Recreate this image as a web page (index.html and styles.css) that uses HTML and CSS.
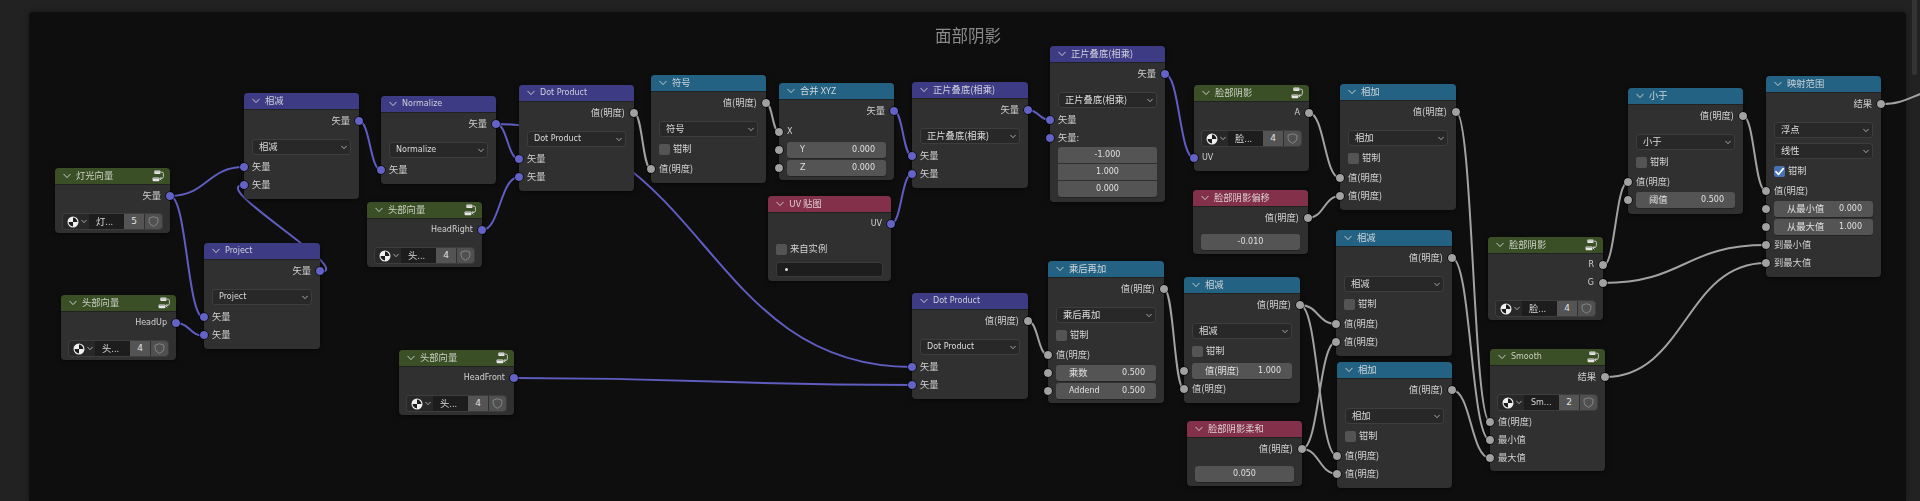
FILE: index.html
```html
<!DOCTYPE html>
<html lang="zh">
<head>
<meta charset="utf-8">
<title>面部阴影</title>
<link rel="stylesheet" href="styles.css">
</head>
<body>
<svg class="defs" width="0" height="0" aria-hidden="true">
  <symbol id="chev" viewBox="0 0 8 6"><path d="M.8 1.200 4 4.600 7.200 1.200" fill="none" stroke="currentColor" stroke-width="1" stroke-linecap="round" stroke-linejoin="round"/></symbol>
  <symbol id="grp" viewBox="0 0 12 12"><rect x="2.300" y=".6" width="6.200" height="3.400" rx=".8" fill="#e6e6e6"/><rect x="2.900" y="1.600" width="5" height=".6" fill="#9a9a9a"/><rect x=".6" y="7.400" width="6.800" height="3.900" rx=".8" fill="#e6e6e6"/><rect x="1.200" y="8" width="5.600" height=".7" fill="#8f8f8f"/><path d="M9 2.200h1.200q1.200 0 1.200 1.200v3.300q0 1.300-1.200 1.600L8.200 8.800" fill="none" stroke="#e6e6e6" stroke-width=".8"/><path d="M9.400 7 7.800 8.800l1.600 1.500" fill="none" stroke="#e6e6e6" stroke-width=".8"/></symbol>
  <symbol id="ball" viewBox="0 0 12 12"><circle cx="6" cy="6" r="5.500" fill="#efefef"/><path d="M6 6V1.600A4.400 4.400 0 0 1 10.400 6ZM6 6v4.400A4.400 4.400 0 0 1 1.600 6Z" fill="#1c1c1c"/></symbol>
  <symbol id="shield" viewBox="0 0 12 12"><path d="M6 .8 10.800 2.400V6q0 3.400-4.800 5.300Q1.200 9.400 1.200 6V2.400Z" fill="none" stroke="#9a9a9a" stroke-width=".8" stroke-linejoin="round"/></symbol>
  <symbol id="check" viewBox="0 0 10 10"><path d="M1.800 5.200 4.100 7.600 8.400 2.400" fill="none" stroke="#fff" stroke-width="1.500" stroke-linecap="round" stroke-linejoin="round"/></symbol>
</svg>

<main class="editor">
  <div class="frame"></div>
  <h1 class="frame-title">面部阴影</h1>

  <svg class="links" viewBox="0 0 1920 501" aria-hidden="true">
    <g class="vec-links">
      <path d="M170 196C207 196 207 167 244 167"/>
      <path d="M170 196C187 196 187 318 204 318"/>
      <path d="M176 323C190 323 190 336 204 336"/>
      <path d="M320 272C358 272 206 185 244 185"/>
      <path d="M359 121C370 121 370 170 381 170"/>
      <path d="M496 124C507.500 124 507.500 159 519 159"/>
      <path d="M496 124C704 124 704 367 912 367"/>
      <path d="M482 230C500 230 500 177 519 177"/>
      <path d="M514 378C713 378 713 385 912 385"/>
      <path d="M894 111C903 111 903 156 912 156"/>
      <path d="M891 224C901.500 224 901.500 174 912 174"/>
      <path d="M1028 110C1039 110 1039 120 1050 120"/>
      <path d="M1165 74C1179.500 74 1179.500 158 1194 158"/>
    </g>
    <g class="val-links">
      <path d="M634 113C642.500 113 642.500 169 651 169"/>
      <path d="M766 103C772.500 103 772.500 132 779 132"/>
      <path d="M1028 321C1038 321 1038 355 1048 355"/>
      <path d="M1164 289C1174 289 1174 389 1184 389"/>
      <path d="M1300 305C1318 305 1318 324 1336 324"/>
      <path d="M1300 305C1318.500 305 1318.500 456 1337 456"/>
      <path d="M1302 449C1319 449 1319 342 1336 342"/>
      <path d="M1302 449C1319.500 449 1319.500 474 1337 474"/>
      <path d="M1309 113C1324.500 113 1324.500 178 1340 178"/>
      <path d="M1308 218C1324 218 1324 196 1340 196"/>
      <path d="M1456 112C1473 112 1473 422 1490 422"/>
      <path d="M1452 258C1471 258 1471 440 1490 440"/>
      <path d="M1452 390C1471 390 1471 458 1490 458"/>
      <path d="M1603 266C1615.500 266 1615.500 182 1628 182"/>
      <path d="M1603 283C1684.500 283 1684.500 245 1766 245"/>
      <path d="M1605 377C1685.500 377 1685.500 263 1766 263"/>
      <path d="M1743 116C1754.500 116 1754.500 191 1766 191"/>
      <path d="M1881 104C1900 104 1905 100 1925 92"/>
    </g>
  </svg>

  <section class="node grp-node n-light">
    <header class="hd green"><svg class="chev"><use href="#chev"/></svg><span class="zh">灯光向量</span><svg class="gi"><use href="#grp"/></svg></header>
    <div class="row out"><span class="zh">矢量</span><i class="sock vec"></i></div>
    <div class="idb"><span class="idb-a"><svg class="ball"><use href="#ball"/></svg><svg class="mini"><use href="#chev"/></svg></span><span class="idb-n zh">灯...</span><span class="idb-c">5</span><span class="idb-s"><svg class="shield"><use href="#shield"/></svg></span></div>
  </section>

  <section class="node n-sub1">
    <header class="hd purple"><svg class="chev"><use href="#chev"/></svg><span class="zh">相减</span></header>
    <div class="row out"><span class="zh">矢量</span><i class="sock vec"></i></div>
    <div class="dd"><span class="zh">相减</span><svg class="mini"><use href="#chev"/></svg></div>
    <div class="row in first"><i class="sock vec"></i><span class="zh">矢量</span></div>
    <div class="row in"><i class="sock vec"></i><span class="zh">矢量</span></div>
  </section>

  <section class="node n-norm">
    <header class="hd purple"><svg class="chev"><use href="#chev"/></svg><span>Normalize</span></header>
    <div class="row out"><span class="zh">矢量</span><i class="sock vec"></i></div>
    <div class="dd"><span>Normalize</span><svg class="mini"><use href="#chev"/></svg></div>
    <div class="row in first"><i class="sock vec"></i><span class="zh">矢量</span></div>
  </section>

  <section class="node grp-node n-hright">
    <header class="hd green"><svg class="chev"><use href="#chev"/></svg><span class="zh">头部向量</span><svg class="gi"><use href="#grp"/></svg></header>
    <div class="row out"><span>HeadRight</span><i class="sock vec"></i></div>
    <div class="idb"><span class="idb-a"><svg class="ball"><use href="#ball"/></svg><svg class="mini"><use href="#chev"/></svg></span><span class="idb-n zh">头...</span><span class="idb-c">4</span><span class="idb-s"><svg class="shield"><use href="#shield"/></svg></span></div>
  </section>

  <section class="node n-project">
    <header class="hd purple"><svg class="chev"><use href="#chev"/></svg><span>Project</span></header>
    <div class="row out"><span class="zh">矢量</span><i class="sock vec"></i></div>
    <div class="dd"><span>Project</span><svg class="mini"><use href="#chev"/></svg></div>
    <div class="row in first"><i class="sock vec"></i><span class="zh">矢量</span></div>
    <div class="row in"><i class="sock vec"></i><span class="zh">矢量</span></div>
  </section>

  <section class="node grp-node n-hup">
    <header class="hd green"><svg class="chev"><use href="#chev"/></svg><span class="zh">头部向量</span><svg class="gi"><use href="#grp"/></svg></header>
    <div class="row out"><span>HeadUp</span><i class="sock vec"></i></div>
    <div class="idb"><span class="idb-a"><svg class="ball"><use href="#ball"/></svg><svg class="mini"><use href="#chev"/></svg></span><span class="idb-n zh">头...</span><span class="idb-c">4</span><span class="idb-s"><svg class="shield"><use href="#shield"/></svg></span></div>
  </section>

  <section class="node grp-node n-hfront">
    <header class="hd green"><svg class="chev"><use href="#chev"/></svg><span class="zh">头部向量</span><svg class="gi"><use href="#grp"/></svg></header>
    <div class="row out"><span>HeadFront</span><i class="sock vec"></i></div>
    <div class="idb"><span class="idb-a"><svg class="ball"><use href="#ball"/></svg><svg class="mini"><use href="#chev"/></svg></span><span class="idb-n zh">头...</span><span class="idb-c">4</span><span class="idb-s"><svg class="shield"><use href="#shield"/></svg></span></div>
  </section>

  <section class="node n-dot1">
    <header class="hd purple"><svg class="chev"><use href="#chev"/></svg><span>Dot Product</span></header>
    <div class="row out"><span class="zh">值(明度)</span><i class="sock val"></i></div>
    <div class="dd"><span>Dot Product</span><svg class="mini"><use href="#chev"/></svg></div>
    <div class="row in first"><i class="sock vec"></i><span class="zh">矢量</span></div>
    <div class="row in"><i class="sock vec"></i><span class="zh">矢量</span></div>
  </section>

  <section class="node n-sign">
    <header class="hd blue"><svg class="chev"><use href="#chev"/></svg><span class="zh">符号</span></header>
    <div class="row out"><span class="zh">值(明度)</span><i class="sock val"></i></div>
    <div class="dd"><span class="zh">符号</span><svg class="mini"><use href="#chev"/></svg></div>
    <div class="row cb first"><i class="box"></i><span class="zh">钳制</span></div>
    <div class="row in after-cb"><i class="sock val"></i><span class="zh">值(明度)</span></div>
  </section>

  <section class="node tight n-xyz">
    <header class="hd blue"><svg class="chev"><use href="#chev"/></svg><span class="zh">合并 XYZ</span></header>
    <div class="row out"><span class="zh">矢量</span><i class="sock vec"></i></div>
    <div class="row in first"><i class="sock val"></i><span>X</span></div>
    <div class="row in fld"><i class="sock val"></i><div class="f"><span>Y</span><span>0.000</span></div></div>
    <div class="row in fld"><i class="sock val"></i><div class="f"><span>Z</span><span>0.000</span></div></div>
  </section>

  <section class="node grp-node n-uv">
    <header class="hd red"><svg class="chev"><use href="#chev"/></svg><span class="zh">UV 贴图</span></header>
    <div class="row out"><span>UV</span><i class="sock vec"></i></div>
    <div class="row cb uv-cb"><i class="box"></i><span class="zh">来自实例</span></div>
    <div class="txt"><i class="dot"></i></div>
  </section>

  <section class="node n-mul1">
    <header class="hd purple"><svg class="chev"><use href="#chev"/></svg><span class="zh">正片叠底(相乘)</span></header>
    <div class="row out"><span class="zh">矢量</span><i class="sock vec"></i></div>
    <div class="dd"><span class="zh">正片叠底(相乘)</span><svg class="mini"><use href="#chev"/></svg></div>
    <div class="row in first"><i class="sock vec"></i><span class="zh">矢量</span></div>
    <div class="row in"><i class="sock vec"></i><span class="zh">矢量</span></div>
  </section>

  <section class="node n-mul2">
    <header class="hd purple"><svg class="chev"><use href="#chev"/></svg><span class="zh">正片叠底(相乘)</span></header>
    <div class="row out"><span class="zh">矢量</span><i class="sock vec"></i></div>
    <div class="dd"><span class="zh">正片叠底(相乘)</span><svg class="mini"><use href="#chev"/></svg></div>
    <div class="row in first"><i class="sock vec"></i><span class="zh">矢量</span></div>
    <div class="row in"><i class="sock vec"></i><span class="zh">矢量:</span></div>
    <div class="stack"><span>-1.000</span><span>1.000</span><span>0.000</span></div>
  </section>

  <section class="node grp-node n-face1">
    <header class="hd green"><svg class="chev"><use href="#chev"/></svg><span class="zh">脸部阴影</span><svg class="gi"><use href="#grp"/></svg></header>
    <div class="row out"><span>A</span><i class="sock val"></i></div>
    <div class="idb"><span class="idb-a"><svg class="ball"><use href="#ball"/></svg><svg class="mini"><use href="#chev"/></svg></span><span class="idb-n zh">脸...</span><span class="idb-c">4</span><span class="idb-s"><svg class="shield"><use href="#shield"/></svg></span></div>
    <div class="row in first"><i class="sock vec"></i><span>UV</span></div>
  </section>

  <section class="node grp-node n-offset">
    <header class="hd red"><svg class="chev"><use href="#chev"/></svg><span class="zh">脸部阴影偏移</span></header>
    <div class="row out"><span class="zh">值(明度)</span><i class="sock val"></i></div>
    <div class="one">-0.010</div>
  </section>

  <section class="node n-add1">
    <header class="hd blue"><svg class="chev"><use href="#chev"/></svg><span class="zh">相加</span></header>
    <div class="row out"><span class="zh">值(明度)</span><i class="sock val"></i></div>
    <div class="dd"><span class="zh">相加</span><svg class="mini"><use href="#chev"/></svg></div>
    <div class="row cb first"><i class="box"></i><span class="zh">钳制</span></div>
    <div class="row in after-cb"><i class="sock val"></i><span class="zh">值(明度)</span></div>
    <div class="row in"><i class="sock val"></i><span class="zh">值(明度)</span></div>
  </section>

  <section class="node n-sub2">
    <header class="hd blue"><svg class="chev"><use href="#chev"/></svg><span class="zh">相减</span></header>
    <div class="row out"><span class="zh">值(明度)</span><i class="sock val"></i></div>
    <div class="dd"><span class="zh">相减</span><svg class="mini"><use href="#chev"/></svg></div>
    <div class="row cb first"><i class="box"></i><span class="zh">钳制</span></div>
    <div class="row in after-cb"><i class="sock val"></i><span class="zh">值(明度)</span></div>
    <div class="row in"><i class="sock val"></i><span class="zh">值(明度)</span></div>
  </section>

  <section class="node n-dot2">
    <header class="hd purple"><svg class="chev"><use href="#chev"/></svg><span>Dot Product</span></header>
    <div class="row out"><span class="zh">值(明度)</span><i class="sock val"></i></div>
    <div class="dd"><span>Dot Product</span><svg class="mini"><use href="#chev"/></svg></div>
    <div class="row in first"><i class="sock vec"></i><span class="zh">矢量</span></div>
    <div class="row in"><i class="sock vec"></i><span class="zh">矢量</span></div>
  </section>

  <section class="node tight n-muladd">
    <header class="hd blue"><svg class="chev"><use href="#chev"/></svg><span class="zh">乘后再加</span></header>
    <div class="row out"><span class="zh">值(明度)</span><i class="sock val"></i></div>
    <div class="dd"><span class="zh">乘后再加</span><svg class="mini"><use href="#chev"/></svg></div>
    <div class="row cb first"><i class="box"></i><span class="zh">钳制</span></div>
    <div class="row in after-cb"><i class="sock val"></i><span class="zh">值(明度)</span></div>
    <div class="row in fld"><i class="sock val"></i><div class="f"><span class="zh">乘数</span><span>0.500</span></div></div>
    <div class="row in fld"><i class="sock val"></i><div class="f"><span>Addend</span><span>0.500</span></div></div>
  </section>

  <section class="node n-sub3">
    <header class="hd blue"><svg class="chev"><use href="#chev"/></svg><span class="zh">相减</span></header>
    <div class="row out"><span class="zh">值(明度)</span><i class="sock val"></i></div>
    <div class="dd"><span class="zh">相减</span><svg class="mini"><use href="#chev"/></svg></div>
    <div class="row cb first"><i class="box"></i><span class="zh">钳制</span></div>
    <div class="row in fld after-cb"><i class="sock val"></i><div class="f"><span class="zh">值(明度)</span><span>1.000</span></div></div>
    <div class="row in"><i class="sock val"></i><span class="zh">值(明度)</span></div>
  </section>

  <section class="node grp-node n-soft">
    <header class="hd red"><svg class="chev"><use href="#chev"/></svg><span class="zh">脸部阴影柔和</span></header>
    <div class="row out"><span class="zh">值(明度)</span><i class="sock val"></i></div>
    <div class="one">0.050</div>
  </section>

  <section class="node n-add2">
    <header class="hd blue"><svg class="chev"><use href="#chev"/></svg><span class="zh">相加</span></header>
    <div class="row out"><span class="zh">值(明度)</span><i class="sock val"></i></div>
    <div class="dd"><span class="zh">相加</span><svg class="mini"><use href="#chev"/></svg></div>
    <div class="row cb first"><i class="box"></i><span class="zh">钳制</span></div>
    <div class="row in after-cb"><i class="sock val"></i><span class="zh">值(明度)</span></div>
    <div class="row in"><i class="sock val"></i><span class="zh">值(明度)</span></div>
  </section>

  <section class="node grp-node n-face2">
    <header class="hd green"><svg class="chev"><use href="#chev"/></svg><span class="zh">脸部阴影</span><svg class="gi"><use href="#grp"/></svg></header>
    <div class="row out"><span>R</span><i class="sock val"></i></div>
    <div class="row out"><span>G</span><i class="sock val"></i></div>
    <div class="idb"><span class="idb-a"><svg class="ball"><use href="#ball"/></svg><svg class="mini"><use href="#chev"/></svg></span><span class="idb-n zh">脸...</span><span class="idb-c">4</span><span class="idb-s"><svg class="shield"><use href="#shield"/></svg></span></div>
  </section>

  <section class="node grp-node n-smooth">
    <header class="hd green"><svg class="chev"><use href="#chev"/></svg><span>Smooth</span><svg class="gi"><use href="#grp"/></svg></header>
    <div class="row out"><span class="zh">结果</span><i class="sock val"></i></div>
    <div class="idb"><span class="idb-a"><svg class="ball"><use href="#ball"/></svg><svg class="mini"><use href="#chev"/></svg></span><span class="idb-n">Sm...</span><span class="idb-c">2</span><span class="idb-s"><svg class="shield"><use href="#shield"/></svg></span></div>
    <div class="row in first"><i class="sock val"></i><span class="zh">值(明度)</span></div>
    <div class="row in"><i class="sock val"></i><span class="zh">最小值</span></div>
    <div class="row in"><i class="sock val"></i><span class="zh">最大值</span></div>
  </section>

  <section class="node n-less">
    <header class="hd blue"><svg class="chev"><use href="#chev"/></svg><span class="zh">小于</span></header>
    <div class="row out"><span class="zh">值(明度)</span><i class="sock val"></i></div>
    <div class="dd"><span class="zh">小于</span><svg class="mini"><use href="#chev"/></svg></div>
    <div class="row cb first"><i class="box"></i><span class="zh">钳制</span></div>
    <div class="row in after-cb"><i class="sock val"></i><span class="zh">值(明度)</span></div>
    <div class="row in fld"><i class="sock val"></i><div class="f"><span class="zh">阈值</span><span>0.500</span></div></div>
  </section>

  <section class="node n-map">
    <header class="hd blue"><svg class="chev"><use href="#chev"/></svg><span class="zh">映射范围</span></header>
    <div class="row out"><span class="zh">结果</span><i class="sock val"></i></div>
    <div class="dd"><span class="zh">浮点</span><svg class="mini"><use href="#chev"/></svg></div>
    <div class="dd dd-2"><span class="zh">线性</span><svg class="mini"><use href="#chev"/></svg></div>
    <div class="row cb first"><i class="box on"><svg class="tick"><use href="#check"/></svg></i><span class="zh">钳制</span></div>
    <div class="row in after-cb"><i class="sock val"></i><span class="zh">值(明度)</span></div>
    <div class="row in fld"><i class="sock val"></i><div class="f"><span class="zh">从最小值</span><span>0.000</span></div></div>
    <div class="row in fld"><i class="sock val"></i><div class="f"><span class="zh">从最大值</span><span>1.000</span></div></div>
    <div class="row in"><i class="sock val"></i><span class="zh">到最小值</span></div>
    <div class="row in"><i class="sock val"></i><span class="zh">到最大值</span></div>
  </section>

  <div class="scroll"></div>
</main>
</body>
</html>
```

FILE: styles.css
```css
* { box-sizing: border-box; }
html, body { margin: 0; height: 100%; }
body { background: #222; overflow: hidden; font: 8px/1 "DejaVu Sans", "Noto Sans CJK SC", sans-serif; color: #d2d2d2; }
.defs { position: absolute; }

.editor { position: relative; width: 1920px; height: 501px; padding: 12px 14px 0 29px; overflow: hidden; filter: blur(.3px); }
.frame { height: 100%; background: #0e0e0e; border-radius: 4px 4px 0 0; box-shadow: 0 0 6px rgba(0, 0, 0, .35); }
.frame-title { position: absolute; left: 935px; top: 26px; margin: 0; font: 400 16.500px/18px "Noto Sans CJK SC", sans-serif; color: #8a8a8a; }
.scroll { position: absolute; left: 1912px; top: 0; width: 5px; height: 75px; background: #343434; border-radius: 0 0 3px 3px; }

.links { position: absolute; inset: 0; width: 1920px; height: 501px; fill: none; stroke-width: 2; }
.vec-links { stroke: #5f5dc0; }
.val-links { stroke: #a2a2a2; }

.node { position: absolute; width: 115px; background: #303030; border-radius: 4px; padding-bottom: 5px; box-shadow: 0 1px 4px rgba(0, 0, 0, .55); }
.grp-node { padding-bottom: 4px; }
.tight { padding-bottom: 3px; }

.hd { display: flex; align-items: center; height: 16px; padding: 0 6px 0 8px; border-radius: 4px 4px 0 0; color: #c9cfc4; box-shadow: 0 1px 0 rgba(0, 0, 0, .3); }
.green { background: #3a4f25; }
.purple { background: #3c3b84; color: #cfcfdc; }
.blue { background: #246283; color: #cdd6db; }
.red { background: #83304a; color: #dccfd3; }
.chev { width: 8px; height: 6px; margin-right: 5px; flex: none; color: #c8c8c8; }
.gi { width: 12px; height: 12px; margin-left: auto; flex: none; }
.zh { font-size: 9.300px; font-family: "Noto Sans CJK SC", "DejaVu Sans", sans-serif; }

.row { position: relative; display: flex; align-items: center; height: 18px; }
.out { justify-content: flex-end; padding-right: 9px; }
.hd + .out { margin-top: 3px; }
.in { padding: 0 8px; }
.first { margin-top: 3px; }
.in.fld + .in, .row.cb + .in { margin-top: 0; }
.row.cb + .in { margin-top: 2px; }

.sock { position: absolute; top: 50%; width: 8px; height: 8px; margin-top: -4px; border-radius: 50%; outline: 1px solid rgba(0, 0, 0, .55); }
.out .sock { right: -4px; }
.in .sock { left: -4px; }
.vec { background: #6363c7; }
.val { background: #a1a1a1; }

.dd { display: flex; align-items: center; justify-content: space-between; height: 16px; margin: 9px 8px 0; padding: 0 3px 0 6px; background: #282828; border: 1px solid #3d3d3d; border-radius: 3px; color: #dcdcdc; }
.dd-2 { margin-top: 5px; }
.mini { width: 6px; height: 5px; flex: none; color: #d0d0d0; }

.cb { padding-left: 8px; gap: 3px; }
.box { display: block; width: 11px; height: 11px; background: #545454; border-radius: 2px; flex: none; }
.box.on { background: #4772b3; }
.tick { display: block; width: 11px; height: 11px; }
.uv-cb { margin-top: 7px; }

.fld .f { display: flex; flex: 1; align-items: center; justify-content: space-between; height: 16px; padding: 0 11px 0 13px; background: #545454; border-radius: 3px; color: #e0e0e0; box-shadow: 0 1px 0 rgba(0, 0, 0, .25); }

.txt { display: flex; align-items: center; height: 15px; margin: 4px 8px 0; padding-left: 8px; background: #1d1d1d; border: 1px solid #3a3a3a; border-radius: 3px; }
.dot { width: 3px; height: 3px; background: #ddd; border-radius: 50%; }

.one { display: flex; align-items: center; justify-content: center; height: 16px; margin: 7px 8px 0; background: #545454; border-radius: 3px; color: #e0e0e0; box-shadow: 0 1px 0 rgba(0, 0, 0, .25); }
.n-soft .one { margin-top: 8px; }

.stack { display: flex; flex-direction: column; gap: 1px; margin: 0 8px; border-radius: 3px; overflow: hidden; box-shadow: 0 1px 0 rgba(0, 0, 0, .25); }
.stack span { display: flex; align-items: center; justify-content: center; height: 16px; background: #545454; color: #e0e0e0; }

.idb { display: flex; height: 15px; margin: 9px 8px 0; border-radius: 3px; overflow: hidden; box-shadow: 0 0 0 1px #3d3d3d; }
.idb-a { display: flex; align-items: center; gap: 2px; flex: none; width: 26px; padding-left: 4px; background: #282828; }
.ball { width: 12px; height: 12px; flex: none; }
.idb-n { display: flex; align-items: center; flex: 1; min-width: 0; padding-left: 7px; background: #1d1d1d; color: #d8d8d8; white-space: nowrap; overflow: hidden; }
.idb-c { display: flex; align-items: center; justify-content: center; flex: none; width: 20px; background: #545454; color: #e0e0e0; font-size: 9px; }
.idb-s { display: flex; align-items: center; justify-content: center; flex: none; width: 17px; margin-left: 1px; background: #505050; }
.shield { width: 11px; height: 11px; }

/* Places on the node canvas */
.n-light   { left: 55px;   top: 168px; }
.n-sub1    { left: 244px;  top: 93px; }
.n-norm    { left: 381px;  top: 96px; }
.n-hright  { left: 367px;  top: 202px; }
.n-project { left: 204px;  top: 243px; width: 116px; }
.n-hup     { left: 61px;   top: 295px; }
.n-hfront  { left: 399px;  top: 350px; }
.n-dot1    { left: 519px;  top: 85px; }
.n-sign    { left: 651px;  top: 75px; }
.n-xyz     { left: 779px;  top: 83px; }
.n-uv      { left: 768px;  top: 196px; width: 123px; }
.n-mul1    { left: 912px;  top: 82px;  width: 116px; }
.n-mul2    { left: 1050px; top: 46px; }
.n-face1   { left: 1194px; top: 85px; }
.n-offset  { left: 1193px; top: 190px; }
.n-add1    { left: 1340px; top: 84px;  width: 116px; }
.n-sub2    { left: 1336px; top: 230px; width: 116px; }
.n-dot2    { left: 912px;  top: 293px; width: 116px; }
.n-muladd  { left: 1048px; top: 261px; width: 116px; }
.n-sub3    { left: 1184px; top: 277px; width: 116px; }
.n-soft    { left: 1187px; top: 421px; }
.n-add2    { left: 1337px; top: 362px; }
.n-face2   { left: 1488px; top: 237px; }
.n-smooth  { left: 1490px; top: 349px; }
.n-less    { left: 1628px; top: 88px; }
.n-map     { left: 1766px; top: 76px; }
```
